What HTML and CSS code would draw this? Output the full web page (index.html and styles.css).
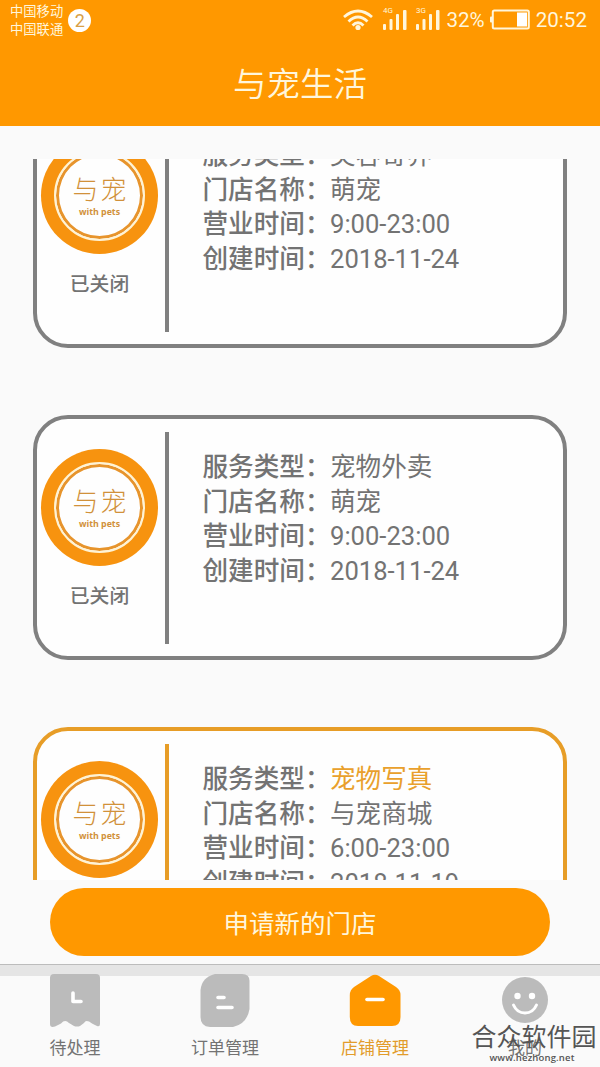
FILE: index.html
```html
<!DOCTYPE html>
<html lang="zh-CN">
<head>
  <meta charset="UTF-8" />
  <title>与宠生活</title>
  <link rel="stylesheet" href="styles.css">
</head>
<body>
  <header>
    <div class="status-bar">
      <div class="carriers">
        <span>中国移动</span>
        <span>中国联通</span>
      </div>
      <span class="notice">2</span>
      <svg class="status-icons" width="118" height="40" viewBox="0 0 118 40">
        <!-- wifi -->
        <g fill="none" stroke="#fff6dc" stroke-width="2.8">
          <path d="M1 17Q15 5 29 17" />
          <path d="M5.5 21.5Q15 12.5 24.5 21.5" />
          <path d="M9.5 25.5Q15 20 20.5 25.5" />
        </g>
        <circle cx="15" cy="27.5" r="2.6" fill="#fff6dc" />
        <!-- signal -->
        <g fill="#fff6dc">
          <rect x="40" y="24" width="3" height="6" rx="1" />
          <rect x="46.5" y="19" width="3" height="11" rx="1" />
          <rect x="53" y="14" width="3" height="16" rx="1" />
          <rect x="60" y="10" width="3.5" height="20" rx="1" />
          <rect x="73" y="24" width="3" height="6" rx="1" />
          <rect x="79.5" y="19" width="3" height="11" rx="1" />
          <rect x="86" y="14" width="3" height="16" rx="1" />
          <rect x="93" y="10" width="3.5" height="20" rx="1" />
          <text x="40" y="13" font-size="8">4G</text>
          <text x="73" y="13" font-size="8">3G</text>
        </g>
      </svg>
      <span class="percent">32%</span>
      <svg class="battery" width="42" height="22" viewBox="0 0 42 22">
        <rect x="3.8" y="1.5" width="36" height="18" rx="1.5" fill="none" stroke="#fff6dc" stroke-width="2" />
        <rect x="1" y="7.5" width="2.5" height="6" rx="1" fill="#fff6dc" />
        <rect x="28" y="3.5" width="10" height="14" fill="#fff" />
      </svg>
      <span class="clock">20:52</span>
    </div>
    <h1>与宠生活</h1>
  </header>

  <main>
    <div class="shop-list">
      <div class="shop">
        <div class="shop-side">
          <div class="logo"><div class="logo-inner"><span class="logo-name">与宠</span><span class="logo-sub">with pets</span></div></div>
          <span class="state">已关闭</span>
        </div>
        <div class="divider"></div>
        <dl class="shop-info">
          <dt>服务类型：</dt><dd>美容寄养</dd>
          <dt>门店名称：</dt><dd>萌宠</dd>
          <dt>营业时间：</dt><dd>9:00-23:00</dd>
          <dt>创建时间：</dt><dd>2018-11-24</dd>
        </dl>
      </div>

      <div class="shop">
        <div class="shop-side">
          <div class="logo"><div class="logo-inner"><span class="logo-name">与宠</span><span class="logo-sub">with pets</span></div></div>
          <span class="state">已关闭</span>
        </div>
        <div class="divider"></div>
        <dl class="shop-info">
          <dt>服务类型：</dt><dd>宠物外卖</dd>
          <dt>门店名称：</dt><dd>萌宠</dd>
          <dt>营业时间：</dt><dd>9:00-23:00</dd>
          <dt>创建时间：</dt><dd>2018-11-24</dd>
        </dl>
      </div>

      <div class="shop open">
        <div class="shop-side">
          <div class="logo"><div class="logo-inner"><span class="logo-name">与宠</span><span class="logo-sub">with pets</span></div></div>
        </div>
        <div class="divider"></div>
        <dl class="shop-info">
          <dt>服务类型：</dt><dd class="type">宠物写真</dd>
          <dt>门店名称：</dt><dd>与宠商城</dd>
          <dt>营业时间：</dt><dd>6:00-23:00</dd>
          <dt>创建时间：</dt><dd>2018-11-19</dd>
        </dl>
      </div>
    </div>
  </main>

  <button class="apply">申请新的门店</button>

  <nav class="tabs">
    <a class="tab">
      <svg width="52" height="56" viewBox="0 0 52 56">
        <path d="M5 2H47Q51 2 51 6V52Q51 55 48 54L43 51.5Q37 47 35 51L31 54Q28 55 25 54L20 51Q16 47 12 51.5L6 54.5Q1 56 1 52V6Q1 2 5 2Z" fill="#bbb" />
        <path d="M24 21V29.5H32" fill="none" stroke="#fff" stroke-width="3.6" stroke-linecap="round" stroke-linejoin="round" />
      </svg>
      <span>待处理</span>
    </a>
    <a class="tab">
      <svg width="52" height="56" viewBox="0 0 52 56">
        <path d="M16 2H43Q50.5 2 50.5 9V37Q48 52 34 55H11Q1.5 54.5 1.5 45V18Q3 5 16 2Z" fill="#bbb" />
        <path d="M19 25.5H25M19 35.5H33" stroke="#fff" stroke-width="3.6" stroke-linecap="round" />
      </svg>
      <span>订单管理</span>
    </a>
    <a class="tab active">
      <svg width="52" height="56" viewBox="0 0 52 56">
        <path d="M22 4Q26 1.5 30 4L47 15Q51.5 18 51.5 23V45Q51.5 54 43 54H9Q.8 54 .8 45V23Q.8 18 5 15Z" fill="#ff9800" />
        <path d="M18 27.5H34" stroke="#fff" stroke-width="3.6" stroke-linecap="round" />
      </svg>
      <span>店铺管理</span>
    </a>
    <a class="tab">
      <svg width="52" height="56" viewBox="0 0 52 56">
        <circle cx="26" cy="28" r="23" fill="#bbb" />
        <circle cx="18.5" cy="24" r="3.2" fill="#fff" />
        <circle cx="33" cy="24" r="3.2" fill="#fff" />
        <path d="M14.5 33Q18 41 26 41Q34 41 37.5 33" fill="none" stroke="#fff" stroke-width="3" stroke-linecap="round" />
      </svg>
      <span>我的</span>
    </a>
  </nav>

  <div class="watermark">
    <span class="mark-name">合众软件园</span>
    <span class="mark-url">www.hezhong.net</span>
  </div>
</body>
</html>
```
FILE: styles.css
```css
* {
  box-sizing: border-box;
}

body {
  margin: 0;
  width: 600px;
  height: 1067px;
  overflow: hidden;
  display: flex;
  flex-direction: column;
  position: relative;
  font-family: Roboto, "Noto Sans CJK SC", sans-serif;
  background-color: #fafafa;
  color: #737373;
}

header {
  height: 126px;
  flex-shrink: 0;
  background-color: #ff9800;
  color: #fff6dc;
}

.status-bar {
  height: 40px;
  padding: 0 13px 0 10px;
  display: flex;
  align-items: center;
}

.carriers {
  display: flex;
  flex-direction: column;
  font-size: 13.3px;
  line-height: 18px;
  padding-top: 2px;
}

.notice {
  width: 23px;
  height: 23px;
  margin-left: 5px;
  border-radius: 50%;
  background-color: #fff;
  color: #d9a046;
  font-size: 18px;
  line-height: 23px;
  text-align: center;
}

.status-icons {
  margin-left: auto;
  margin-right: -15px;
}

.percent,
.clock {
  font-size: 20.6px;
  line-height: 42px;
}

.battery {
  margin: 0 5px 0 4px;
}

h1 {
  margin: 0;
  font-size: 33.5px;
  font-weight: 350;
  line-height: 89px;
  text-align: center;
}

main {
  height: 721px;
  flex-shrink: 0;
  margin-top: 33px;
  overflow: hidden;
}

/* the list is scrolled part of the way down */
.shop-list {
  margin-top: -56px;
  padding: 0 33px;
  display: flex;
  flex-direction: column;
  gap: 67px;
}

.shop {
  height: 245px;
  flex-shrink: 0;
  display: flex;
  border: 4px solid #808080;
  border-radius: 35px;
  background-color: #fefefe;
}

.shop.open {
  border-color: #e79d27;
}

.shop-side {
  width: 126px;
  margin-left: 2px;
  padding: 29.5px 0 0 2px;
  display: flex;
  flex-direction: column;
  align-items: flex-start;
}

.logo {
  width: 117px;
  height: 117px;
  padding: 13px;
  border-radius: 50%;
  background-color: #f7930f;
}

.logo-inner {
  height: 91px;
  border: 2px solid #fff3d4;
  border-radius: 50%;
  display: flex;
  flex-direction: column;
  align-items: center;
  padding-top: 21px;
  background-color: #fefefe;
  box-shadow: inset 0 0 0 3px #e7942c;
  color: #d1913a;
}

.logo-name {
  font-size: 26px;
  font-weight: 200;
  line-height: 34px;
  letter-spacing: 2px;
  margin-right: -2px;
}

.logo-sub {
  font-family: "Open Sans", sans-serif;
  font-size: 8.8px;
  font-weight: 700;
  line-height: 10px;
}

.state {
  width: 117px;
  margin-top: 16px;
  font-size: 19.8px;
  font-weight: 500;
  line-height: 30px;
  text-align: center;
}

.divider {
  width: 4px;
  height: 212px;
  margin-top: 13px;
  background-color: #808080;
}

.open .divider {
  background-color: #e79d27;
}

.shop-info {
  margin: 31px 0 0 33.5px;
  display: grid;
  grid-template-columns: 127.5px auto;
  grid-auto-rows: 34.6px;
  align-content: start;
  font-size: 25.6px;
  line-height: 34.6px;
  white-space: nowrap;
}

.shop-info dt {
  font-weight: 500;
}

.shop-info dd {
  margin: 0;
}

.shop-info .type {
  color: #e9a02c;
}

.apply {
  width: 500px;
  height: 68px;
  flex-shrink: 0;
  margin: 8px auto 0;
  padding: 0 0 2px;
  border: none;
  border-radius: 34px;
  background-color: #ff9800;
  color: #fff6dc;
  font-family: inherit;
  font-size: 25.5px;
}

.tabs {
  height: 103px;
  flex-shrink: 0;
  margin-top: 8px;
  padding-top: 7px;
  display: grid;
  grid-template-columns: repeat(4, 1fr);
  border-top: 1px solid #bcbcbc;
  background: linear-gradient(#e5e5e5 11px, #fafafa 11px);
}

.tab {
  display: flex;
  flex-direction: column;
  align-items: center;
  font-size: 17px;
  line-height: 40px;
}

.tab span {
  height: 38px;
}

.tab.active {
  color: #e29c2b;
}

.watermark {
  position: absolute;
  top: 1020px;
  left: 471px;
  width: 126px;
  display: flex;
  flex-direction: column;
  align-items: center;
  color: #555;
  white-space: nowrap;
}

.mark-name {
  font-size: 25px;
  line-height: 36px;
}

.mark-url {
  margin-right: 4px;
  font-family: "Open Sans", sans-serif;
  font-size: 9.5px;
  font-weight: 600;
  letter-spacing: 0.15px;
  line-height: 4px;
}
```
